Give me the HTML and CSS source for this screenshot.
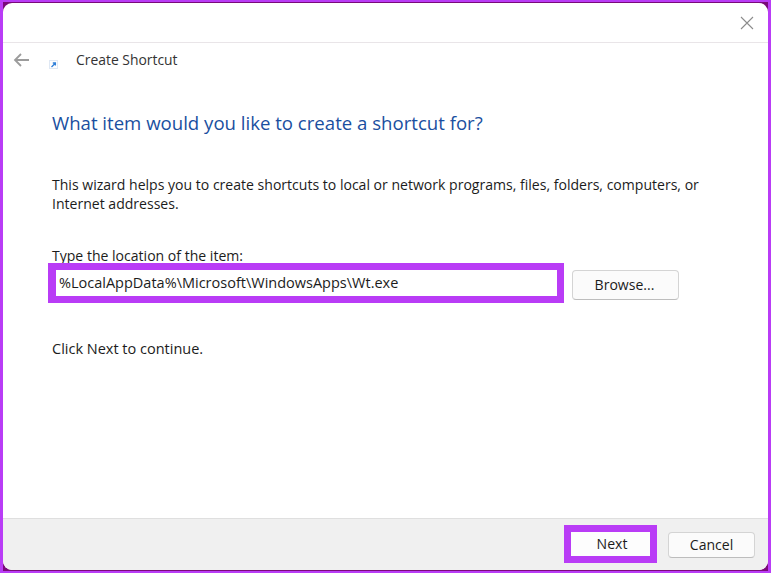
FILE: index.html
```html
<!DOCTYPE html>
<html lang="en">
<head>
<meta charset="utf-8">
<title>Create Shortcut</title>
<link rel="stylesheet" href="styles.css">
</head>
<body>
<div class="frame">
  <div class="shell">
  <div class="window">
    <header class="titlebar">
      <svg class="close" width="14" height="14" viewBox="0 0 14 14"><path d="M1 1L13 13M13 1L1 13" stroke="#8c8c8c" stroke-width="1.1" fill="none"/></svg>
    </header>
    <main class="content">
      <div class="nav">
        <svg class="back" width="17" height="14" viewBox="0 0 17 14"><path d="M16 7H2M8 1L2 7l6 6" stroke="#9c9c9c" stroke-width="1.8" fill="none"/></svg>
        <svg class="app-icon" width="9" height="9" viewBox="0 0 9 9"><rect width="9" height="9" fill="#dfe8f4"/><rect x="1" y="1" width="7" height="7" fill="#fdfdfe"/><path d="M2.5 7L6 3.5M3.8 3H6.4V5.6" stroke="#2f7fd8" stroke-width="1.3" fill="none"/></svg>
        <span class="nav-title">Create Shortcut</span>
      </div>
      <h1 class="heading">What item would you like to create a shortcut for?</h1>
      <p class="intro">This wizard helps you to create shortcuts to local or network programs, files, folders, computers, or Internet addresses.</p>
      <label class="field-label" for="loc">Type the location of the item:</label>
      <div class="field-row">
        <div class="highlight input-mark">
          <input id="loc" class="location" type="text" value="%LocalAppData%\Microsoft\WindowsApps\Wt.exe">
        </div>
        <button class="btn browse" type="button">Browse...</button>
      </div>
      <p class="hint">Click Next to continue.</p>
    </main>
    <footer class="footer">
      <div class="highlight next-mark"><button class="next" type="button">Next</button></div>
      <button class="btn cancel" type="button">Cancel</button>
    </footer>
  </div>
  </div>
</div>
</body>
</html>
```
FILE: styles.css
```css
html, body {
  margin: 0;
  padding: 0;
}
body {
  width: 771px;
  height: 573px;
  overflow: hidden;
  font-family: "Open Sans", "Noto Sans", sans-serif;
  font-size: 14.05px;
  color: #1c1c1c;
}
.frame {
  box-sizing: border-box;
  width: 771px;
  height: 573px;
  padding: 2px 3px;
  background: #b93cf6;
}
.shell {
  box-sizing: border-box;
  height: 569px;
  padding: 1px 0;
  background: #7a0a7a;
}
.window {
  box-sizing: border-box;
  height: 567px;
  display: flex;
  flex-direction: column;
  background: #ffffff;
  border-radius: 9px;
  overflow: hidden;
}
.titlebar {
  flex: none;
  box-sizing: border-box;
  height: 40px;
  border-bottom: 1px solid #e9e5e8;
  display: flex;
  justify-content: flex-end;
  align-items: center;
  padding: 0 14px 0 0;
}
.close {
  margin-top: 1px;
}
.content {
  flex: 1;
  display: flex;
  flex-direction: column;
}
.nav {
  display: flex;
  align-items: center;
  height: 34px;
  padding-left: 10px;
}
.back {
  margin-right: 19px;
}
.app-icon {
  margin: 9px 18px 0 0;
}
.nav-title {
  font-size: 13.9px;
  color: #333;
  padding-bottom: 2px;
}
.heading {
  margin: 33px 0 0 49px;
  font-size: 18.6px;
  line-height: 26px;
  font-weight: 400;
  color: #1a4fa0;
}
.intro {
  margin: 39px 0 0 49px;
  width: 680px;
  line-height: 19px;
}
.field-label {
  margin: 33px 0 0 49px;
  line-height: 19px;
}
.field-row {
  display: flex;
  align-items: flex-start;
  margin: -2px 0 0 45px;
}
.highlight {
  box-sizing: border-box;
  background: #b93cf6;
}
.input-mark {
  width: 516px;
  height: 40px;
  padding: 7px 7px 7px 8px;
}
.location {
  box-sizing: border-box;
  display: block;
  width: 100%;
  height: 26px;
  border: 0;
  padding: 0 0 2px 3px;
  margin: 0;
  background: #fff;
  font: inherit;
  font-size: 14.5px;
  color: #1c1c1c;
}
.btn {
  box-sizing: border-box;
  border: 1px solid #d4d4d4;
  border-bottom-color: #bdbdbd;
  border-radius: 4px;
  background: #fbfbfb;
  font: inherit;
  color: #1c1c1c;
  padding: 0 0 2px;
}
.browse {
  width: 107px;
  height: 30px;
  margin: 7px 0 0 8px;
  padding-right: 2px;
}
.hint {
  margin: 36px 0 0 49px;
  line-height: 19px;
  font-size: 14.5px;
}
.footer {
  flex: none;
  box-sizing: border-box;
  height: 52px;
  background: #f0f0f0;
  border-top: 1px solid #dfdfdf;
  display: flex;
  align-items: flex-start;
  padding: 6px 13px 0 561px;
}
.next-mark {
  width: 93px;
  height: 38px;
  padding: 7px;
}
.next {
  display: block;
  box-sizing: border-box;
  width: 100%;
  height: 24px;
  border: 0;
  padding: 0 0 1px 3px;
  background: #fdfdfd;
  font: inherit;
  color: #1c1c1c;
}
.cancel {
  width: 87px;
  height: 26px;
  margin: 7px 0 0 11px;
}
```
